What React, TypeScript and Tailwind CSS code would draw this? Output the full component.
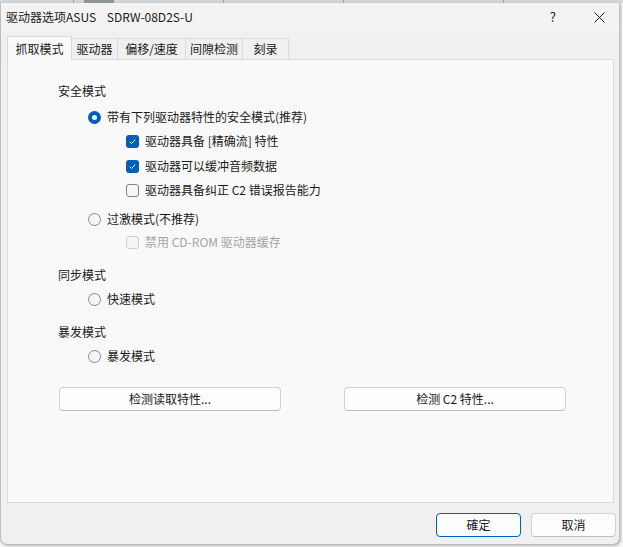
import React from "react"

const font = { fontFamily: '"Noto Sans CJK SC", "Noto Sans", sans-serif' }

function Radio({ checked, label }: { checked?: boolean; label: string }) {
  return (
    <div className="flex items-center h-[20px] pl-[80px]">
      {checked ? (
        <span className="w-[13px] h-[13px] rounded-full bg-[#005fb8] flex items-center justify-center">
          <span className="w-[5px] h-[5px] rounded-full bg-white" />
        </span>
      ) : (
        <span className="w-[13px] h-[13px] rounded-full border border-[#8a8a8a] bg-[#f6f6f6]" />
      )}
      <span className="ml-[6px]">{label}</span>
    </div>
  )
}

function Check({ checked, disabled, label }: { checked?: boolean; disabled?: boolean; label: string }) {
  return (
    <div className="flex items-center h-[20px] pl-[118px]">
      {checked ? (
        <span className="w-[13px] h-[13px] rounded-[3px] bg-[#005fb8] flex items-center justify-center">
          <svg width="9" height="9" viewBox="0 0 9 9">
            <path d="M1.8 4.8 L3.6 6.5 L7.2 2.6" fill="none" stroke="white" strokeWidth="1" />
          </svg>
        </span>
      ) : (
        <span
          className={
            disabled
              ? "w-[13px] h-[13px] rounded-[3px] border border-[#cfcfcf] bg-[#f6f6f6]"
              : "w-[13px] h-[13px] rounded-[3px] border border-[#858585] bg-[#f6f6f6]"
          }
        />
      )}
      <span className={disabled ? "ml-[6px] text-[#a3a3a3]" : "ml-[6px]"}>{label}</span>
    </div>
  )
}

function Tab({ label, width, active }: { label: string; width: string; active?: boolean }) {
  if (active) {
    return (
      <div className={`relative z-10 h-[24px] -mb-px -mt-[2px] ${width} flex items-center justify-center bg-[#f9f9f9] border border-b-0 border-[#d9d9d9]`}>
        {label}
      </div>
    )
  }
  return (
    <div className={`h-[21px] ${width} flex items-center justify-center bg-[#f0f0f0] border border-l-0 border-b-0 border-[#dadada]`}>
      {label}
    </div>
  )
}

export default function App() {
  return (
    <div className="w-[623px] h-[547px] bg-[#f7f7f7] overflow-hidden text-[12px] text-[#1a1a1a]" style={font}>
      {/* strip of the window underneath */}
      <div className="h-[3px] bg-[#d4d7da] flex">
        <div className="w-[74px] border-r border-[#9aa0a6]" />
        <div className="w-[30px] bg-[#8d9297] ml-[10px]" />
        <div className="w-[110px] border-r border-[#9aa0a6]" />
        <div className="w-[120px] border-r border-[#9aa0a6]" />
        <div className="w-[160px] border-r border-[#9aa0a6]" />
      </div>

      <div className="w-[620px] h-[542px] bg-[#f0f0f0] border-l border-r border-b border-[#bcbcbc] rounded-b-[7px] shadow-[1px_1px_3px_rgba(0,0,0,0.25)] flex flex-col">
        {/* title bar */}
        <div className="h-[28px] bg-[#f3f3f3] flex items-center pl-[5px] pr-[14px]">
          <span className="text-[12px]">驱动器选项ASUS&nbsp;&nbsp;&nbsp;&nbsp;SDRW-08D2S-U</span>
          <span className="ml-auto text-[13px] mr-[38px]">?</span>
          <svg width="11" height="11" viewBox="0 0 11 11">
            <path d="M0.5 0.5 L10.5 10.5 M10.5 0.5 L0.5 10.5" stroke="#1a1a1a" strokeWidth="1" />
          </svg>
        </div>

        {/* tabs */}
        <div className="flex items-end mt-[5px] ml-[6px] h-[23px]">
          <Tab label="抓取模式" width="w-[65px]" active />
          <Tab label="驱动器" width="w-[46px]" />
          <Tab label="偏移/速度" width="w-[68px]" />
          <Tab label="间隙检测" width="w-[57px]" />
          <Tab label="刻录" width="w-[46px]" />
        </div>

        {/* page */}
        <div className="mx-[6px] w-[607px] h-[444px] bg-[#f9f9f9] border border-[#dcdcdc] pt-[21px]">
          <div className="h-[20px] flex items-center pl-[50px]">安全模式</div>
          <div className="mt-[6px]">
            <Radio checked label="带有下列驱动器特性的安全模式(推荐)" />
          </div>
          <div className="mt-[4px]">
            <Check checked label="驱动器具备 [精确流] 特性" />
          </div>
          <div className="mt-[5px]">
            <Check checked label="驱动器可以缓冲音频数据" />
          </div>
          <div className="mt-[4px]">
            <Check label="驱动器具备纠正 C2 错误报告能力" />
          </div>
          <div className="mt-[9px]">
            <Radio label="过激模式(不推荐)" />
          </div>
          <div className="mt-[3px]">
            <Check disabled label="禁用 CD-ROM 驱动器缓存" />
          </div>

          <div className="mt-[13px] h-[20px] flex items-center pl-[50px]">同步模式</div>
          <div className="mt-[4px]">
            <Radio label="快速模式" />
          </div>

          <div className="mt-[13px] h-[20px] flex items-center pl-[50px]">暴发模式</div>
          <div className="mt-[4px]">
            <Radio label="暴发模式" />
          </div>

          <div className="mt-[21px] flex pl-[51px] gap-[63px]">
            <button className="w-[222px] h-[24px] bg-[#fdfdfd] border border-[#d3d3d3] border-b-[#bdbdbd] rounded-[4px]">
              检测读取特性...
            </button>
            <button className="w-[222px] h-[24px] bg-[#fdfdfd] border border-[#d3d3d3] border-b-[#bdbdbd] rounded-[4px]">
              检测 C2 特性...
            </button>
          </div>
        </div>

        {/* dialog buttons */}
        <div className="flex justify-end gap-[10px] mt-[10px] pr-[3px]">
          <button className="w-[85px] h-[24px] bg-[#fdfdfd] border border-[#005fb8] rounded-[4px]">確定</button>
          <button className="w-[85px] h-[24px] bg-[#fdfdfd] border border-[#d3d3d3] border-b-[#bdbdbd] rounded-[4px]">取消</button>
        </div>
      </div>
    </div>
  )
}
